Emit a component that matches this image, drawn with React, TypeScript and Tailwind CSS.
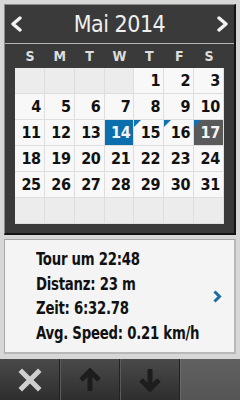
import React from 'react';

const font = { fontFamily: '"Liberation Sans Narrow", "DejaVu Sans Condensed", "Liberation Sans", sans-serif' };

const dayLetters = ['S', 'M', 'T', 'W', 'T', 'F', 'S'];

// May 2014 starts on a Thursday
const cells: (number | null)[] = [
  ...Array(4).fill(null),
  ...Array.from({ length: 31 }, (_, i) => i + 1),
];
while (cells.length < 42) cells.push(null);

const marked = [15, 16, 17];

const Corner = () => (
  <svg className="absolute left-0 top-0" width="7" height="7" viewBox="0 0 7 7">
    <path d="M0 0 H7 L0 7 Z" fill="#1172b4" />
  </svg>
);

const DayCell: React.FC<{ day: number | null }> = ({ day }) => {
  if (day === null) {
    return <div className="bg-[#ececec] border-r border-b border-[#dedede]" />;
  }
  const selected = day === 14;
  const today = day === 17;
  const bg = selected ? 'bg-[#0b6fad]' : today ? 'bg-[#5a5a5a]' : 'bg-[#f8f8f8]';
  const fg = selected || today ? 'text-[#f4f4f4]' : 'text-[#111]';
  return (
    <div className={`relative flex items-end justify-end pr-[3px] pb-[4px] border-r border-b border-[#dedede] ${bg}`}>
      {marked.includes(day) && <Corner />}
      <span className={`text-[16px] font-bold leading-none tracking-[-0.3px] ${fg}`}>{day}</span>
    </div>
  );
};

export default function App() {
  return (
    <div className="w-[240px] h-[400px] bg-[#d7d7d7] flex flex-col overflow-hidden" style={font}>
      {/* Calendar panel */}
      <div className="mx-[4px] mt-[4px] h-[231px] bg-[#3a3a3a] border-l border-t border-[#8a8a8a] border-r-2 border-b-2 border-r-[#141414] border-b-[#141414] flex flex-col">
        <div className="h-[39px] flex items-center justify-between px-[5px] border-b border-[#b4b4b4]">
          <svg width="12" height="16" viewBox="0 0 12 16">
            <path d="M10 2 L3 8 L10 14" fill="none" stroke="#f2f2f2" strokeWidth="3.4" strokeLinecap="round" strokeLinejoin="round" />
          </svg>
          <span className="text-[23px] leading-none text-[#f0f0f0] tracking-[-0.5px] pt-[1px]">Mai 2014</span>
          <svg width="12" height="16" viewBox="0 0 12 16">
            <path d="M2 2 L9 8 L2 14" fill="none" stroke="#f2f2f2" strokeWidth="3.4" strokeLinecap="round" strokeLinejoin="round" />
          </svg>
        </div>
        <div className="px-[10px] h-[24px] grid grid-cols-7 items-center">
          {dayLetters.map((d, i) => (
            <span key={i} className="text-center text-[14px] font-bold leading-none text-[#dedede]">
              {d}
            </span>
          ))}
        </div>
        <div className="mx-[10px] grid grid-cols-7 grid-rows-6 h-[156px]">
          {cells.map((d, i) => (
            <DayCell key={i} day={d} />
          ))}
        </div>
      </div>

      {/* Tour details */}
      <div className="mx-[4px] mt-[4px] h-[115px] bg-[#f4f4f4] border border-[#a9a9a9] border-r-2 border-b-2 border-r-[#b8b8b8] border-b-[#b8b8b8] flex items-center pl-[31px] pr-[12px]">
        <div className="flex-1 min-w-0 flex flex-col whitespace-nowrap text-[18px] font-bold leading-[24.5px] tracking-[-0.3px] text-[#111] scale-x-[0.82] origin-left">
          <span>Tour um 22:48</span>
          <span>Distanz: 23 m</span>
          <span>Zeit: 6:32.78</span>
          <span>Avg. Speed: 0.21 km/h</span>
        </div>
        <svg className="shrink-0" width="10" height="13" viewBox="0 0 10 13">
          <path d="M2.5 1.5 L7.5 6.5 L2.5 11.5" fill="none" stroke="#1a6ca3" strokeWidth="3" strokeLinejoin="miter" />
        </svg>
      </div>

      {/* Bottom bar */}
      <div className="mt-[5px] flex-1 flex">
        <button className="w-[60px] flex items-center justify-center bg-gradient-to-b from-[#4a4a4a] to-[#2e2e2e] border-r border-[#222]">
          <svg width="24" height="24" viewBox="0 0 24 24">
            <path d="M4 4 L20 20 M20 4 L4 20" stroke="#cfcfcf" strokeWidth="5" strokeLinecap="square" />
          </svg>
        </button>
        <button className="w-[60px] flex items-center justify-center bg-gradient-to-b from-[#4a4a4a] to-[#2e2e2e] border-l border-r border-l-[#5a5a5a] border-r-[#222]">
          <svg width="24" height="26" viewBox="0 0 24 26">
            <path d="M12 24 V5 M3 13 L12 4 L21 13" fill="none" stroke="#1d1d1d" strokeWidth="5" strokeLinejoin="miter" />
          </svg>
        </button>
        <button className="w-[60px] flex items-center justify-center bg-gradient-to-b from-[#4a4a4a] to-[#2e2e2e] border-l border-r border-l-[#5a5a5a] border-r-[#222]">
          <svg width="24" height="26" viewBox="0 0 24 26">
            <path d="M12 2 V21 M3 13 L12 22 L21 13" fill="none" stroke="#1d1d1d" strokeWidth="5" strokeLinejoin="miter" />
          </svg>
        </button>
        <div className="flex-1 bg-gradient-to-b from-[#616161] to-[#555] border-l border-[#6a6a6a]" />
      </div>
    </div>
  );
}
